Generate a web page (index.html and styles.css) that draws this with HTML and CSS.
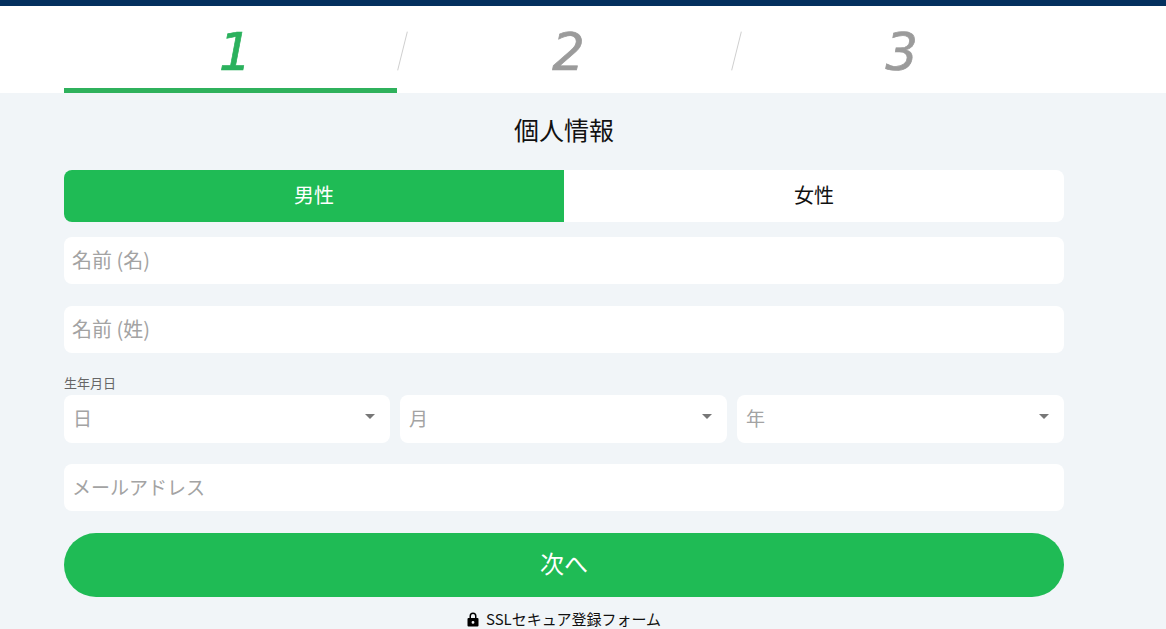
FILE: index.html
```html
<!DOCTYPE html>
<html lang="ja">
<head>
<meta charset="utf-8">
<title>個人情報</title>
<link rel="stylesheet" href="styles.css">
</head>
<body>
<div class="topbar"></div>
<header class="steps-band">
  <ol class="steps">
    <li class="step active"><span class="num">1</span></li>
    <li class="step"><span class="num">2</span></li>
    <li class="step"><span class="num">3</span></li>
  </ol>
</header>
<main class="form">
  <h1 class="title">個人情報</h1>
  <div class="gender">
    <div class="gender-btn selected">男性</div>
    <div class="gender-btn">女性</div>
  </div>
  <div class="field first">名前 (名)</div>
  <div class="field second">名前 (姓)</div>
  <div class="dob-label">生年月日</div>
  <div class="dob">
    <div class="select"><span>日</span><i class="caret"></i></div>
    <div class="select"><span>月</span><i class="caret"></i></div>
    <div class="select"><span>年</span><i class="caret"></i></div>
  </div>
  <div class="field email">メールアドレス</div>
  <div class="next">次へ</div>
  <div class="secure">
    <svg class="lock" viewBox="0 0 12 15" aria-hidden="true"><path d="M2.5 6V4a3.5 3.5 0 0 1 7 0v2h1a1 1 0 0 1 1 1v6.5a1 1 0 0 1-1 1h-9a1 1 0 0 1-1-1V7a1 1 0 0 1 1-1zM4 6h4V4a2 2 0 0 0-4 0zm2 3a1.4 1.4 0 1 0 0 2.8A1.4 1.4 0 0 0 6 9z" fill-rule="evenodd"/></svg>
    <span>SSLセキュア登録フォーム</span>
  </div>
</main>
</body>
</html>
```
FILE: styles.css
```css
* { box-sizing: border-box; }
html, body { margin: 0; height: 629px; overflow: hidden; }
body {
  background: #f1f5f8;
  font-family: "Noto Sans CJK JP", "Noto Sans", sans-serif;
  color: #111;
}
.topbar { height: 6px; background: #04305e; }
.steps-band { background: #fff; height: 87px; padding: 0 64px; }
.steps { list-style: none; margin: 0; padding: 0; width: 1000px; height: 87px; display: flex; }
.step {
  flex: 1 1 0;
  position: relative;
  text-align: center;
  height: 87px;
}
.step .num {
  display: block;
  font-family: "DejaVu Sans", sans-serif;
  font-style: italic;
  font-size: 51px;
  line-height: 62px;
  padding: 16px 0 0 9px;
  color: #9b9b9b;
  -webkit-text-stroke: 0.7px currentColor;
}
.step.active { border-bottom: 5px solid #2fb15c; }
.step.active .num { color: #2bb15d; }
.step + .step::before {
  content: "";
  position: absolute;
  left: 5px;
  top: 25px;
  width: 1px;
  height: 40px;
  background: #cfcfcf;
  transform: rotate(14deg);
}
.form { width: 1000px; margin: 0 auto 0 64px; }
.title { margin: 0; height: 77px; padding-top: 17px; text-align: center; font-size: 25px; line-height: 38px; font-weight: 400; }
.gender { display: flex; height: 52px; border-radius: 8px; overflow: hidden; background: #fff; }
.gender-btn { flex: 1 1 0; display: flex; align-items: center; justify-content: center; font-size: 20px; padding-bottom: 3px; }
.gender-btn.selected { background: #1fbb55; color: #fff; }
.field {
  height: 47px;
  background: #fff;
  border-radius: 8px;
  padding-left: 8px;
  font-size: 20px;
  line-height: 45px;
  color: #a3a3a3;
}
.first { margin-top: 15px; }
.second { margin-top: 22px; }
.dob-label { margin-top: 20px; height: 22px; font-size: 13px; line-height: 20px; color: #666; }
.dob { display: grid; grid-template-columns: 326px 327px 327px; gap: 10px; }
.select {
  height: 48px;
  background: #fff;
  border-radius: 8px;
  padding: 0 15px 0 9px;
  font-size: 19px;
  line-height: 46px;
  color: #a3a3a3;
  display: flex;
  justify-content: space-between;
}
.caret {
  width: 0; height: 0;
  margin-top: 19px;
  border-left: 5.5px solid transparent;
  border-right: 5.5px solid transparent;
  border-top: 5.5px solid #777;
}
.email { margin-top: 21px; font-size: 19px; }
.next {
  margin-top: 22px;
  height: 64px;
  border-radius: 32px;
  background: #1fbb55;
  color: #fff;
  font-size: 24px;
  line-height: 60px;
  text-align: center;
}
.secure {
  height: 32px;
  display: flex;
  align-items: center;
  justify-content: center;
  gap: 7px;
  padding-top: 12px;
  font-size: 15px;
  line-height: 20px;
  color: #111;
}
.lock { width: 12px; height: 15px; fill: #000; }
```
